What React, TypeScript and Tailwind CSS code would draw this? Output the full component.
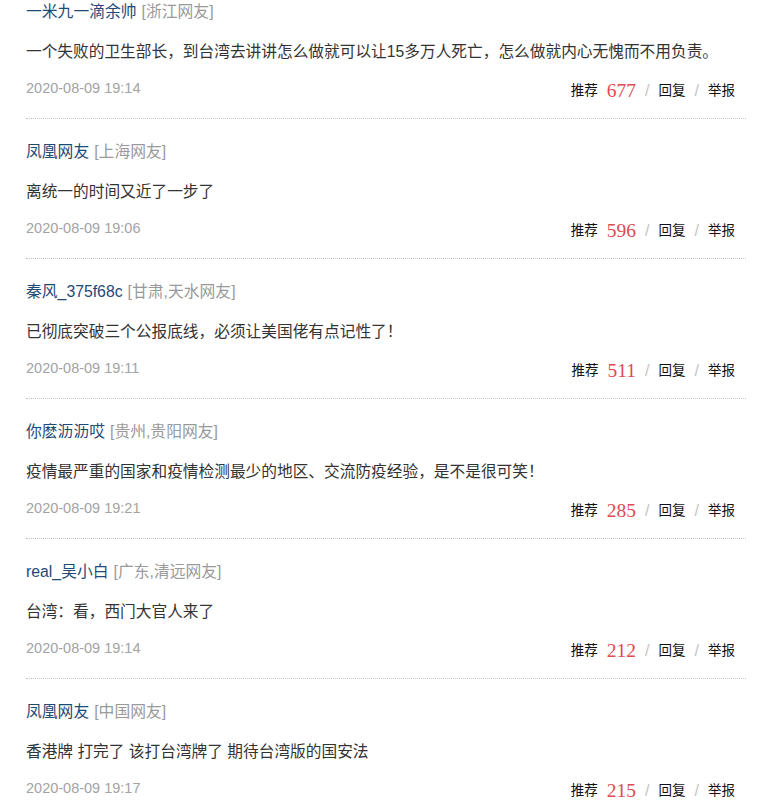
const comments = [
  { name: '一米九一滴余帅', loc: '[浙江网友]', text: '一个失败的卫生部长，到台湾去讲讲怎么做就可以让15多万人死亡，怎么做就内心无愧而不用负责。', time: '2020-08-09 19:14', up: 677 },
  { name: '凤凰网友', loc: '[上海网友]', text: '离统一的时间又近了一步了', time: '2020-08-09 19:06', up: 596 },
  { name: '秦风_375f68c', loc: '[甘肃,天水网友]', text: '已彻底突破三个公报底线，必须让美国佬有点记性了！', time: '2020-08-09 19:11', up: 511 },
  { name: '你麽沥沥哎', loc: '[贵州,贵阳网友]', text: '疫情最严重的国家和疫情检测最少的地区、交流防疫经验，是不是很可笑！', time: '2020-08-09 19:21', up: 285 },
  { name: 'real_吴小白', loc: '[广东,清远网友]', text: '台湾：看，西门大官人来了', time: '2020-08-09 19:14', up: 212 },
  { name: '凤凰网友', loc: '[中国网友]', text: '香港牌 打完了 该打台湾牌了 期待台湾版的国安法', time: '2020-08-09 19:17', up: 215 },
];

const cjk = { fontFamily: '"Liberation Sans", "Noto Sans CJK SC", sans-serif' };

export default function App() {
  return (
    <div className="min-h-[803px] w-[773px] bg-white pl-[26px] pr-[27px]" style={cjk}>
      {comments.map((c, i) => (
        <div key={i} className="border-b border-dotted border-[#c4c4c4] pt-[21px] pb-[17px] first:pt-0">
          <div className="flex h-[24px] items-center text-[15.8px]">
            <span className="text-[#1f4a78]">{c.name}</span>
            <span className="ml-[5px] text-[#9a9a9a]">{c.loc}</span>
          </div>
          <p className="mt-[16px] flex h-[24px] items-center text-[15.7px] text-[#333]">{c.text}</p>
          <div className="mt-[13px] flex h-[24px] items-center justify-between pr-[11px]">
            <span className="text-[14.5px] text-[#a3a3a3]">{c.time}</span>
            <div className="flex translate-y-[2px] items-center text-[13.5px] text-[#111]">
              <span>推荐</span>
              <span className="ml-[9px] text-[19.5px] leading-none text-[#e04a52]" style={{ fontFamily: '"Liberation Serif", serif' }}>
                {c.up}
              </span>
              <span className="mx-[9px] text-[16px] text-[#c4c4c4]">/</span>
              <span>回复</span>
              <span className="mx-[9px] text-[16px] text-[#c4c4c4]">/</span>
              <span>举报</span>
            </div>
          </div>
        </div>
      ))}
    </div>
  );
}
